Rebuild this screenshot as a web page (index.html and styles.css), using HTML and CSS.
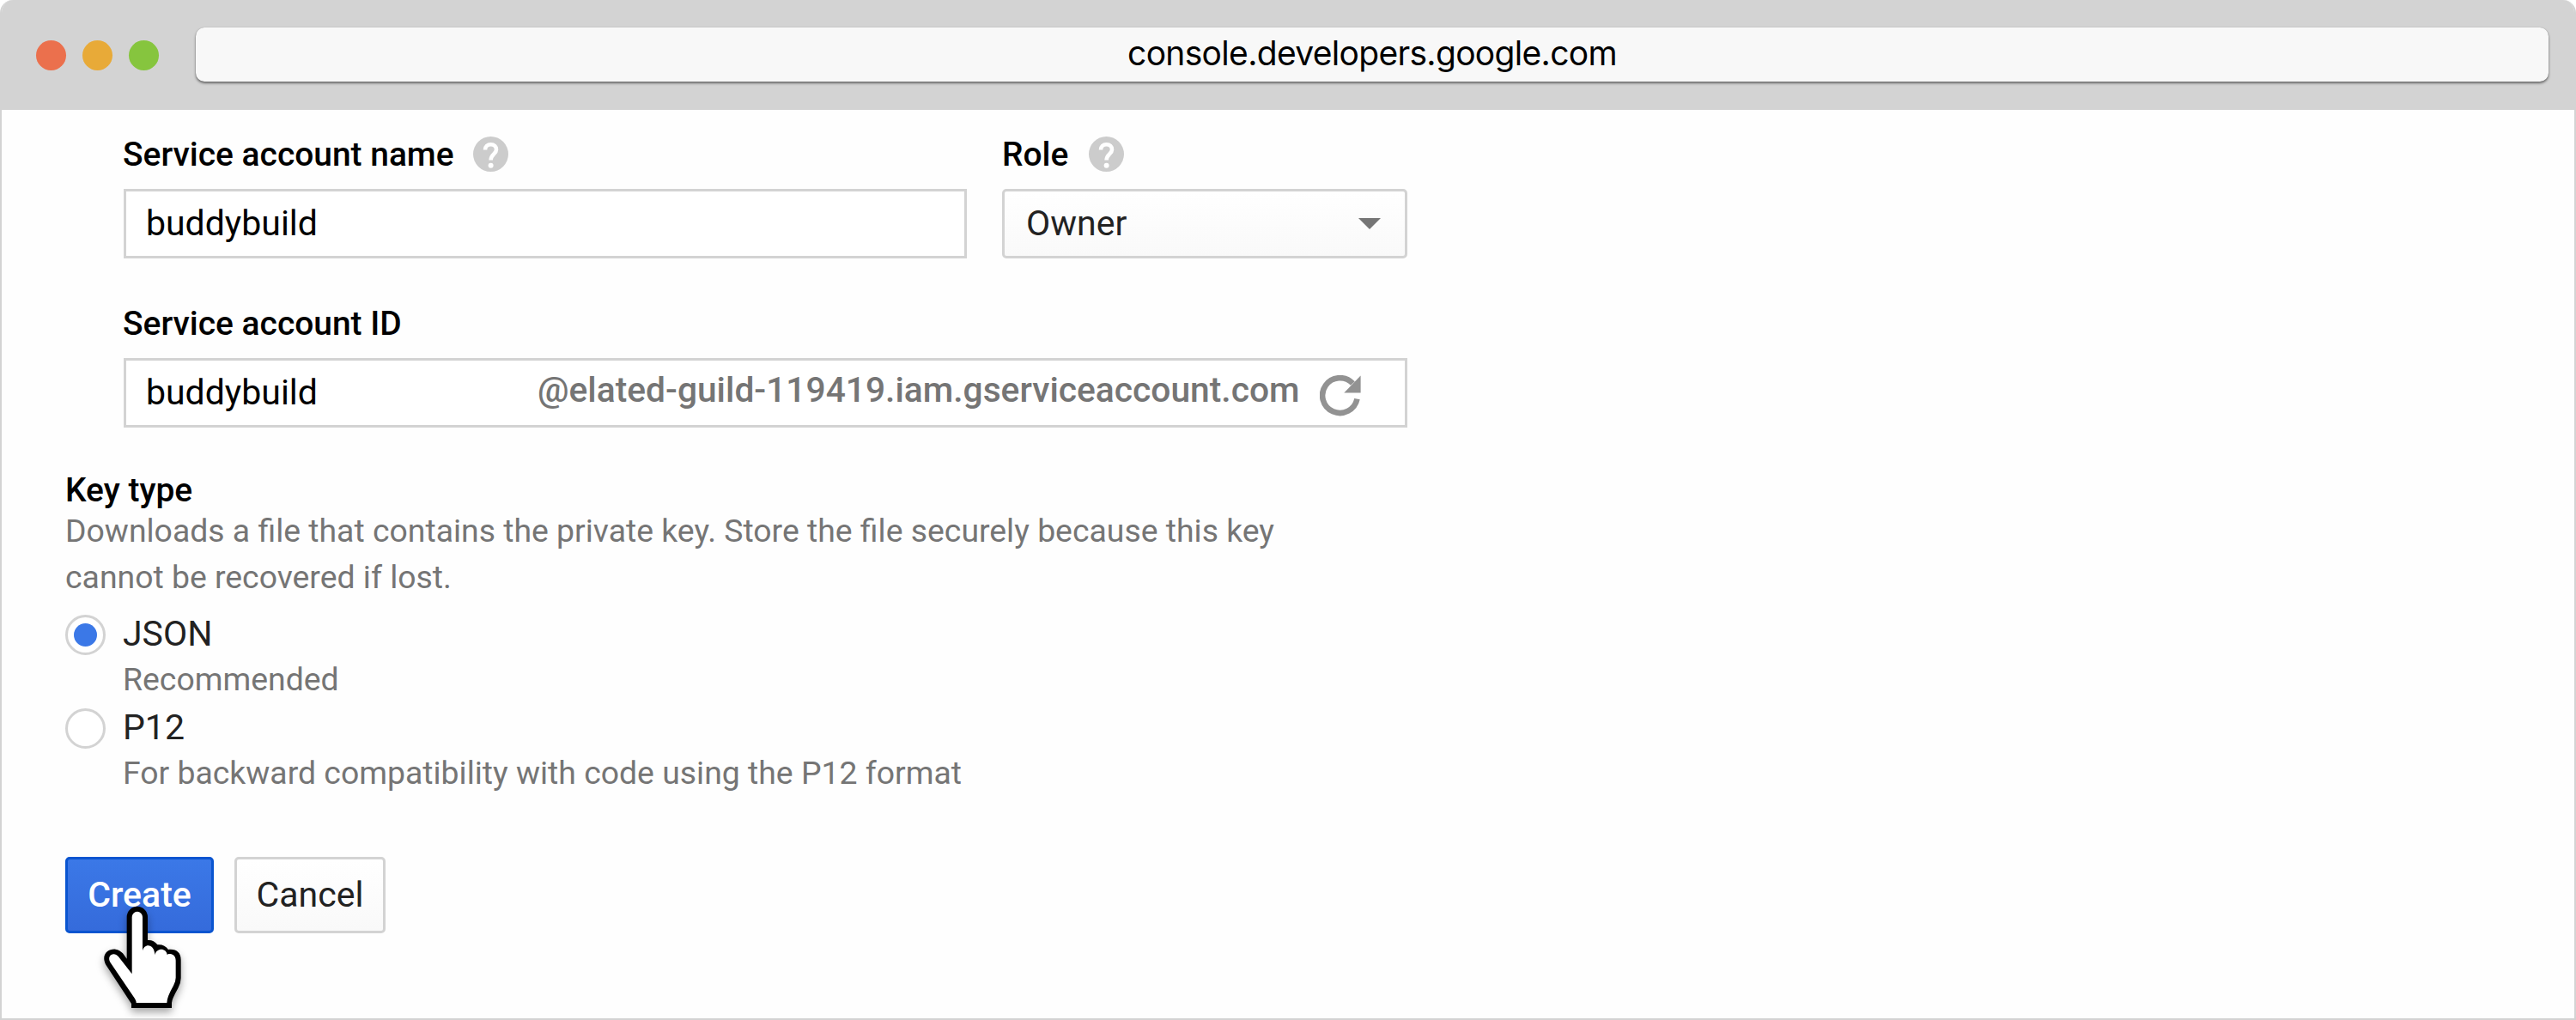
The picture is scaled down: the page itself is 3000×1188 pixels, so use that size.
FILE: index.html
```
<!DOCTYPE html>
<html lang="en">
<head>
<meta charset="utf-8">
<title>console.developers.google.com</title>
<link rel="stylesheet" href="styles.css">
</head>
<body>
<svg class="defs" aria-hidden="true">
  <symbol id="help" viewBox="0 0 41 41">
    <circle cx="20.5" cy="20.5" r="20.5" fill="#ccc"/>
    <path d="M14 15.6C14 11.8 16.7 9.3 20.6 9.3S27 11.8 27 15.2C27 20.4 20.6 20.6 20.6 27.6" fill="none" stroke="#fff" stroke-width="4.6"/>
    <circle cx="20.6" cy="33.8" r="3" fill="#fff"/>
  </symbol>
</svg>
<div class="window">
  <header class="titlebar">
    <div class="dots">
      <span class="dot dot-close"></span>
      <span class="dot dot-min"></span>
      <span class="dot dot-max"></span>
    </div>
    <div class="address">console.developers.google.com</div>
  </header>
  <main class="page">
    <section class="account">
      <div class="row">
        <div class="field field-name">
          <div class="label">Service account name <svg class="help"><use href="#help"/></svg></div>
          <div class="box">buddybuild</div>
        </div>
        <div class="field field-role">
          <div class="label label-role">Role <svg class="help"><use href="#help"/></svg></div>
          <div class="box select">Owner<svg class="caret" viewBox="0 0 26 13"><path d="M0 0H26L13 13Z" fill="#757575"/></svg></div>
        </div>
      </div>
      <div class="field">
        <div class="label">Service account ID</div>
        <div class="box box-id">
          <span class="id-name">buddybuild</span>
          <span class="id-domain">@elated-guild-119419.iam.gserviceaccount.com</span>
          <svg class="refresh" viewBox="0 0 48 48">
            <path d="M43.5 27.7A20.4 20.4 0 1 1 38.4 9.6" fill="none" stroke="#646464" stroke-opacity=".7" stroke-width="6.6"/>
            <path d="M47.6 .6V20.5H28.3Z" fill="#646464" fill-opacity=".7"/>
          </svg>
        </div>
      </div>
    </section>
    <section class="keytype">
      <div class="label">Key type</div>
      <p class="hint">Downloads a file that contains the private key. Store the file securely because this key<br>cannot be recovered if lost.</p>
      <div class="option">
        <span class="radio radio-on"></span>
        <div>
          <div class="option-title">JSON</div>
          <div class="option-hint">Recommended</div>
        </div>
      </div>
      <div class="option">
        <span class="radio"></span>
        <div>
          <div class="option-title">P12</div>
          <div class="option-hint">For backward compatibility with code using the P12 format</div>
        </div>
      </div>
    </section>
    <div class="actions">
      <div class="btn btn-primary">Create
        <svg class="pointer" viewBox="0 0 390 444">
          <path d="M143 84A36.5 36.5 0 0 1 216 84V165Q236 163 250 181Q275 179 288 198C316 195 332 208 332 234V298Q332 316 322 333Q300 372 300 384V402H159V387L71 253C50 216 78 194 104 197Q118 199 129 211L143 230Z" fill="#000"/>
          <path d="M161 84A18.5 18.5 0 0 1 198 84V202C204 175 240 176 241 217C246 191 281 191 284 216C291 209 314 213 314 236V296Q314 308 306 324Q283 364 283 384H176Q176 377 171 369L85 242C72 219 98 203 114 223L161 283Z" fill="#fff"/>
        </svg>
      </div>
      <div class="btn">Cancel</div>
    </div>
  </main>
</div>
</body>
</html>
```
FILE: styles.css
```
* { box-sizing: border-box; }
body { margin: 0; background: #fff; font-family: "Roboto", sans-serif; }
.defs { display: none; }

.window {
  height: 1188px;
  border: solid #d3d3d3;
  border-width: 0 2px 2px;
  border-radius: 15px 15px 0 0;
  overflow: hidden;
  background: #fefefe;
}
.titlebar {
  height: 128px;
  display: flex;
  align-items: center;
  padding: 0 30px 0 40px;
  background: #d3d3d3;
}
.dots { display: flex; gap: 19px; width: 186px; }
.dot { width: 35px; height: 35px; border-radius: 50%; }
.dot-close { background: #eb704d; }
.dot-min { background: #e8aa38; }
.dot-max { background: #86c53e; }
.address {
  flex: 1;
  height: 63px;
  margin-bottom: 1px;
  line-height: 59px;
  text-align: center;
  border-radius: 10px;
  background: #f8f8f8;
  box-shadow: 0 2px 3px rgba(0, 0, 0, .5), 0 0 1px rgba(0, 0, 0, .3);
  font-family: "Inter", sans-serif;
  font-size: 39px;
  letter-spacing: -.68px;
  color: #000;
}

.page { padding: 31px 74px 0; }
.account { padding-left: 68px; width: 1563px; }
.row { display: flex; gap: 41px; margin-bottom: 55px; }
.field-name { width: 982px; }
.field-role { width: 472px; }
.label {
  display: flex;
  align-items: center;
  gap: 22px;
  height: 40px;
  padding-top: 2px;
  line-height: 40px;
  font-size: 38.93px;
  font-weight: 500;
  color: #000;
}
.account .field > .label { margin-left: -1px; }
.account .field > .label-role { margin-left: 0; gap: 24px; }
.help { width: 41px; height: 41px; margin-top: -2px; }
.box {
  display: flex;
  align-items: center;
  height: 81px;
  margin-top: 21px;
  padding: 0 28px 1px 23px;
  border: 3px solid #d3d3d3;
  background: #fff;
  font-size: 41px;
  color: #000;
}
.select {
  justify-content: space-between;
  padding-left: 25px;
  border-radius: 5px;
  background: linear-gradient(#fff, #f9f9f9);
  color: #222;
}
.caret { width: 26px; height: 13px; }
.id-name { width: 456px; }
.id-domain {
  width: 911px;
  margin-bottom: 6px;
  font-size: 40.74px;
  font-weight: 500;
  color: #757575;
}
.refresh { width: 48px; height: 48px; margin-top: 8px; }

.keytype { margin-top: 52px; }
.hint {
  margin: 1px 0 0;
  font-size: 37.37px;
  line-height: 54.3px;
  color: #757575;
}
.option { display: flex; gap: 20px; height: 109px; }
.hint + .option { margin-top: 11.4px; }
.radio {
  display: flex;
  width: 47px;
  height: 47px;
  margin-top: 5px;
  border: 3px solid #d3d3d3;
  border-radius: 50%;
  background: #fff;
}
.radio-on::after {
  content: "";
  width: 27px;
  height: 27px;
  margin: auto;
  border-radius: 50%;
  background: #3b78e7;
}
.option-title { line-height: 55px; font-size: 41px; color: #222; }
.option-hint { line-height: 51px; font-size: 37.37px; color: #757575; }

.actions { display: flex; gap: 24px; margin-top: 69px; }
.btn {
  width: 176px;
  height: 89px;
  line-height: 83px;
  text-align: center;
  border: 3px solid #d3d3d3;
  border-radius: 5px;
  background: linear-gradient(#fff, #f9f9f9);
  font-size: 41px;
  color: #222;
}
.btn-primary {
  position: relative;
  width: 173px;
  border-color: #0a55d0;
  background: linear-gradient(#3b78e7, #356bdb);
  font-weight: 500;
  color: #fff;
}
.pointer {
  position: absolute;
  left: 21px;
  top: 39px;
  width: 130px;
  height: 148px;
  filter: drop-shadow(0 5px 5px rgba(0, 0, 0, .35));
}
```
